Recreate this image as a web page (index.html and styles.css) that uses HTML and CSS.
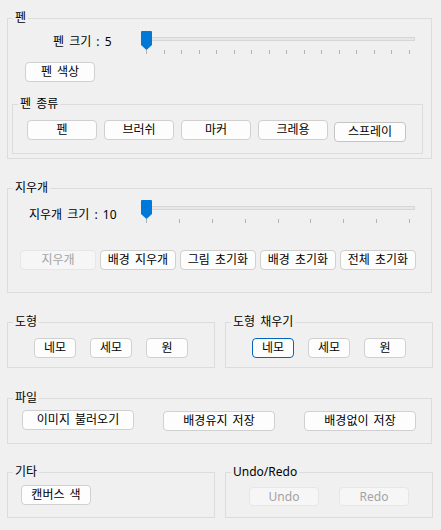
FILE: index.html
```html
<!DOCTYPE html>
<html lang="ko">
<head>
<meta charset="utf-8">
<link rel="stylesheet" href="styles.css">
</head>
<body>
<div class="page">
  <section class="group g-pen">
    <span class="legend">펜</span>
    <div class="slider-row pen-row">
      <span class="s-label pen-label">펜 크기 : 5</span>
      <div class="slider">
        <div class="track"></div>
        <svg class="thumb" width="11" height="19" viewBox="0 0 11 19"><path d="M1 0H10Q11 0 11 1V14L5.5 19L0 14V1Q0 0 1 0Z" fill="#0078d7"/></svg>
        <div class="ticks">
          <i></i><i></i><i></i><i></i><i></i><i></i><i></i><i></i><i></i><i></i><i></i><i></i><i></i><i></i><i></i><i></i>
        </div>
      </div>
    </div>
    <button class="btn pen-color">펜 색상</button>
    <section class="group g-pentype">
      <span class="legend">펜 종류</span>
      <div class="btn-row pentype-row">
        <button class="btn w70">펜</button>
        <button class="btn w70">브러쉬</button>
        <button class="btn w70">마커</button>
        <button class="btn w70">크레용</button>
        <button class="btn spray">스프레이</button>
      </div>
    </section>
  </section>

  <section class="group g-eraser">
    <span class="legend">지우개</span>
    <div class="slider-row eraser-row">
      <span class="s-label eraser-label">지우개 크기 : 10</span>
      <div class="slider">
        <div class="track"></div>
        <svg class="thumb" width="11" height="19" viewBox="0 0 11 19"><path d="M1 0H10Q11 0 11 1V14L5.5 19L0 14V1Q0 0 1 0Z" fill="#0078d7"/></svg>
        <div class="ticks">
          <i></i><i></i><i></i><i></i><i></i><i></i><i></i><i></i><i></i>
        </div>
      </div>
    </div>
    <div class="btn-row eraser-btns">
      <button class="btn w76 disabled">지우개</button>
      <button class="btn w76">배경 지우개</button>
      <button class="btn w76">그림 초기화</button>
      <button class="btn w76">배경 초기화</button>
      <button class="btn w76">전체 초기화</button>
    </div>
  </section>

  <div class="pair pair-shapes">
    <section class="group half">
      <span class="legend">도형</span>
      <div class="btn-row shape-row">
        <button class="btn w42">네모</button>
        <button class="btn w42">세모</button>
        <button class="btn w42">원</button>
      </div>
    </section>
    <section class="group half">
      <span class="legend">도형 채우기</span>
      <div class="btn-row shape-row">
        <button class="btn w42 focused">네모</button>
        <button class="btn w42">세모</button>
        <button class="btn w42">원</button>
      </div>
    </section>
  </div>

  <section class="group g-file">
    <span class="legend">파일</span>
    <div class="btn-row file-row">
      <button class="btn w112">이미지 불러오기</button>
      <button class="btn w112 low">배경유지 저장</button>
      <button class="btn w112 low">배경없이 저장</button>
    </div>
  </section>

  <div class="pair pair-bottom">
    <section class="group half">
      <span class="legend">기타</span>
      <div class="btn-row etc-row">
        <button class="btn w70">캔버스 색</button>
      </div>
    </section>
    <section class="group half">
      <span class="legend">Undo/Redo</span>
      <div class="btn-row undo-row">
        <button class="btn w70 disabled">Undo</button>
        <button class="btn w70 disabled">Redo</button>
      </div>
    </section>
  </div>
</div>
</body>
</html>
```

FILE: styles.css
```css
* { box-sizing: border-box; }
html, body {
  margin: 0;
  padding: 0;
  background: #f0f0f0;
}
body {
  font-family: "Noto Sans", "Noto Sans CJK KR", sans-serif;
  font-size: 12px;
  word-spacing: 2px;
  color: #000;
  width: 441px;
  height: 530px;
  overflow: hidden;
}
.page {
  padding: 18px 0 0 7px;
  display: flex;
  flex-direction: column;
  align-items: flex-start;
}
.group {
  position: relative;
  border: 1px solid #dcdcdc;
}
.legend {
  position: absolute;
  top: -9px;
  left: 5px;
  padding: 0 2px;
  line-height: 16px;
  background: #f0f0f0;
  white-space: nowrap;
}
.g-pen {
  width: 425px;
  height: 141px;
  display: flex;
  flex-direction: column;
  align-items: flex-start;
}
.slider-row {
  display: flex;
  align-items: flex-start;
}
.pen-row { margin-top: 12px; padding-left: 45px; }
.pen-label { width: 88px; padding-top: 3px; }
.eraser-row { margin-top: 11px; padding-left: 21px; }
.eraser-label { width: 112px; padding-top: 7px; }
.s-label {
  line-height: 16px;
  white-space: nowrap;
}
.slider {
  position: relative;
  width: 274px;
  height: 26px;
}
.track {
  position: absolute;
  left: 5px;
  right: 0;
  top: 6px;
  height: 4px;
  background: #e7e7e7;
  border: 1px solid #d6d6d6;
}
.thumb {
  position: absolute;
  left: 0;
  top: 0;
  display: block;
}
.ticks {
  position: absolute;
  left: 5px;
  width: 264px;
  top: 19px;
  height: 4px;
  display: flex;
  justify-content: space-between;
}
.ticks i {
  display: block;
  width: 1px;
  height: 4px;
  background: #b4b4b4;
}
.btn {
  font: inherit;
  word-spacing: 2px;
  color: #000;
  height: 20px;
  padding: 0;
  margin: 0;
  border: 1px solid #d0d0d0;
  border-radius: 4px;
  background: #fdfdfd;
  display: flex;
  align-items: center;
  justify-content: center;
  line-height: 16px;
  white-space: nowrap;
}
.btn.disabled {
  background: #f6f6f6;
  border-color: #e6e6e6;
  color: #a3a3a3;
}
.btn.focused {
  border-color: #0067c0;
}
.w70 { width: 70px; }
.w76 { width: 76px; }
.w42 { width: 42px; }
.w112 { width: 112px; }
.pen-color {
  width: 70px;
  margin: 5px 0 0 17px;
}
.g-pentype {
  width: 411px;
  height: 50px;
  margin: 22px 0 0 4px;
}
.btn-row {
  display: flex;
  align-items: flex-start;
}
.pentype-row {
  padding: 15px 0 0 14px;
  gap: 7px;
}
.spray {
  width: 72px;
  margin: 2px 0 0 -1px;
  border-color: #c4c4c4;
}
.g-eraser {
  width: 425px;
  height: 105px;
  margin-top: 29px;
}
.eraser-btns {
  margin-top: 24px;
  padding-left: 12px;
  gap: 4px;
}
.pair {
  display: flex;
  gap: 10px;
}
.pair-shapes { margin-top: 29px; }
.pair-bottom { margin-top: 28px; }
.half {
  width: 208px;
  height: 46px;
}
.shape-row {
  padding: 15px 0 0 26px;
  gap: 14px;
}
.g-file {
  width: 425px;
  height: 46px;
  margin-top: 30px;
}
.file-row {
  padding: 11px 0 0 14px;
  gap: 29px;
}
.btn.low { margin-top: 1px; }
.etc-row { padding: 12px 0 0 13px; }
.undo-row {
  padding: 14px 0 0 23px;
  gap: 20px;
}
.undo-row .btn { height: 19px; }
```
